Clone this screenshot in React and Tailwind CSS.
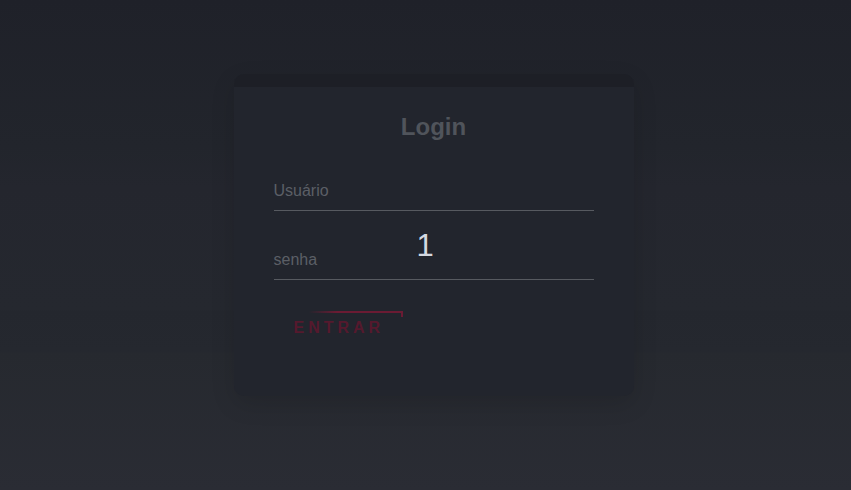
export default function App() {
  return (
    <div
      className="w-full h-[490px] overflow-hidden flex justify-center pt-[74px] pl-[16px] bg-[linear-gradient(to_bottom,#1f2129_0px,#22252c_147px,#24262e_187px,#25282f_310px,#24272e_311px,#25282f_352px,#26292f_353px,#2a2c34_490px)]"
      style={{ fontFamily: '"Liberation Sans", Arial, sans-serif' }}
    >
      <div className="relative w-[400px] h-[322px] rounded-[10px] bg-[#22252d] overflow-hidden shadow-[0_8px_24px_rgba(0,0,0,0.12)]">
        <div className="h-[13px] bg-[#1d1f26]" />
        <h1 className="pt-6 text-center text-2xl font-bold text-[#50545b] leading-8">
          Login
        </h1>
        <div className="px-10 mt-7 flex flex-col gap-[29px]">
          <div className="h-10 flex items-center border-b border-[#575a60] text-base text-[#5b5f66]">
            Usuário
          </div>
          <div className="h-10 flex items-center border-b border-[#575a60] text-base text-[#5b5f66]">
            senha
          </div>
          <div className="flex">
            <button className="relative mt-[2px] px-5 h-[34px] flex items-center text-base font-bold tracking-[4px] text-[#55192d]">
              ENTRAR
              <span className="absolute top-0 left-[35px] w-[94px] h-[2px] bg-[linear-gradient(to_right,transparent,#6b1b33_30%)]" />
              <span className="absolute top-0 left-[127px] w-[2px] h-[6px] bg-[#6b1b33]" />
            </button>
          </div>
        </div>
        <span className="absolute left-[183px] top-[156px] text-[31px] leading-none text-[#d4d8e0]">
          1
        </span>
      </div>
    </div>
  )
}
